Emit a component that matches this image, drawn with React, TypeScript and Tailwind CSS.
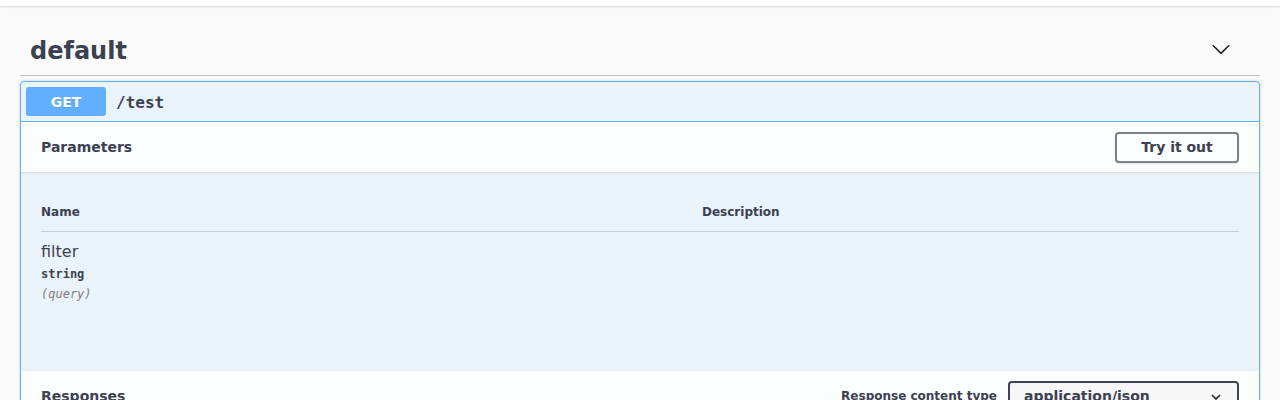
import React from "react";

const sans = "font-['DejaVu_Sans','Open_Sans',sans-serif]";
const mono = "font-['DejaVu_Sans_Mono','Liberation_Mono',monospace]";

function Arrow({ className }: { className?: string }) {
  return (
    <svg viewBox="0 0 20 20" width="20" height="20" className={className} fill="currentColor">
      <path d="M17.418 6.109c.272-.268.709-.268.979 0s.271.701 0 .969l-7.908 7.83c-.27.268-.707.268-.979 0l-7.908-7.83c-.27-.268-.27-.701 0-.969.271-.268.709-.268.979 0L10 13.25l7.418-7.141z" />
    </svg>
  );
}

export default function App() {
  return (
    <div className={`${sans} min-h-[400px] bg-[#fafafa] text-[#3b4151] overflow-hidden`}>
      <div className="h-[6px] bg-white shadow-[0_1px_2px_0_rgba(0,0,0,0.15)]" />
      <div className="px-[20px] pt-[20px]">
        <div className="flex items-center h-[50px] pl-[10px] pr-[20px] border-b border-[rgba(59,65,81,0.3)] mb-[5px]">
          <h3 className="flex-1 text-[24px] font-bold leading-[29px] pt-[2px]">default</h3>
          <div className="mr-[9px] mb-[4px] text-[#1a1a1a]">
            <Arrow />
          </div>
        </div>

        <div className="border border-[#61affe] rounded-[4px] bg-[rgba(97,175,254,0.1)] shadow-[0_0_3px_rgba(0,0,0,0.19)] overflow-hidden">
          <div className="flex items-center p-[5px] border-b border-[#61affe]">
            <span className="w-[80px] h-[29px] flex items-center justify-center rounded-[3px] bg-[#61affe] text-white text-[14px] font-bold pt-[1px] [text-shadow:0_1px_0_rgba(0,0,0,0.1)]">
              GET
            </span>
            <span className={`${mono} px-[10px] pt-[2px] text-[16px] font-bold text-[#3b4151]`}>/test</span>
          </div>

          <div className="flex items-center justify-between min-h-[50px] px-[20px] py-[8px] bg-[rgba(255,255,255,0.8)] shadow-[0_1px_2px_rgba(0,0,0,0.1)]">
            <h4 className="text-[14px] font-bold">Parameters</h4>
            <button className="w-[124px] h-[31px] border-2 border-[#808080] rounded-[4px] text-[14px] font-bold text-[#3b4151] shadow-[0_1px_2px_rgba(0,0,0,0.1)] bg-transparent">
              Try it out
            </button>
          </div>

          <div className="h-[199px] p-[20px]">
            <div className="flex border-b border-[rgba(59,65,81,0.2)] text-[12px] font-bold pt-[13px] pb-[12px] leading-[14px]">
              <div className="w-[661px]">Name</div>
              <div>Description</div>
            </div>
            <div className="py-[10px]">
              <div className="text-[16px] leading-[20px]">filter</div>
              <div className={`${mono} text-[12px] font-bold leading-[15px] py-[5px]`}>string</div>
              <div className={`${mono} text-[12px] italic leading-[15px] text-[#808080]`}>(query)</div>
            </div>
          </div>

          <div className="flex items-center justify-between min-h-[50px] px-[20px] py-[8px] bg-[rgba(255,255,255,0.8)] shadow-[0_1px_2px_rgba(0,0,0,0.1)]">
            <h4 className="text-[14px] font-bold">Responses</h4>
            <div className="flex items-center">
              <span className="text-[12px] font-bold mr-[11px]">Response content type</span>
              <div className="relative w-[231px] h-[30px] border-2 border-[#41444e] rounded-[4px] bg-[#f7f7f7] flex items-center pl-[14px] text-[14px] font-bold">
                application/json
                <svg viewBox="0 0 10 6" width="10" height="6" className="absolute right-[16px] top-[11px]" fill="none" stroke="#222" strokeWidth="1.6">
                  <path d="M1 1l4 4 4-4" />
                </svg>
              </div>
            </div>
          </div>
          <div className="h-[40px]" />
        </div>
      </div>
    </div>
  );
}
